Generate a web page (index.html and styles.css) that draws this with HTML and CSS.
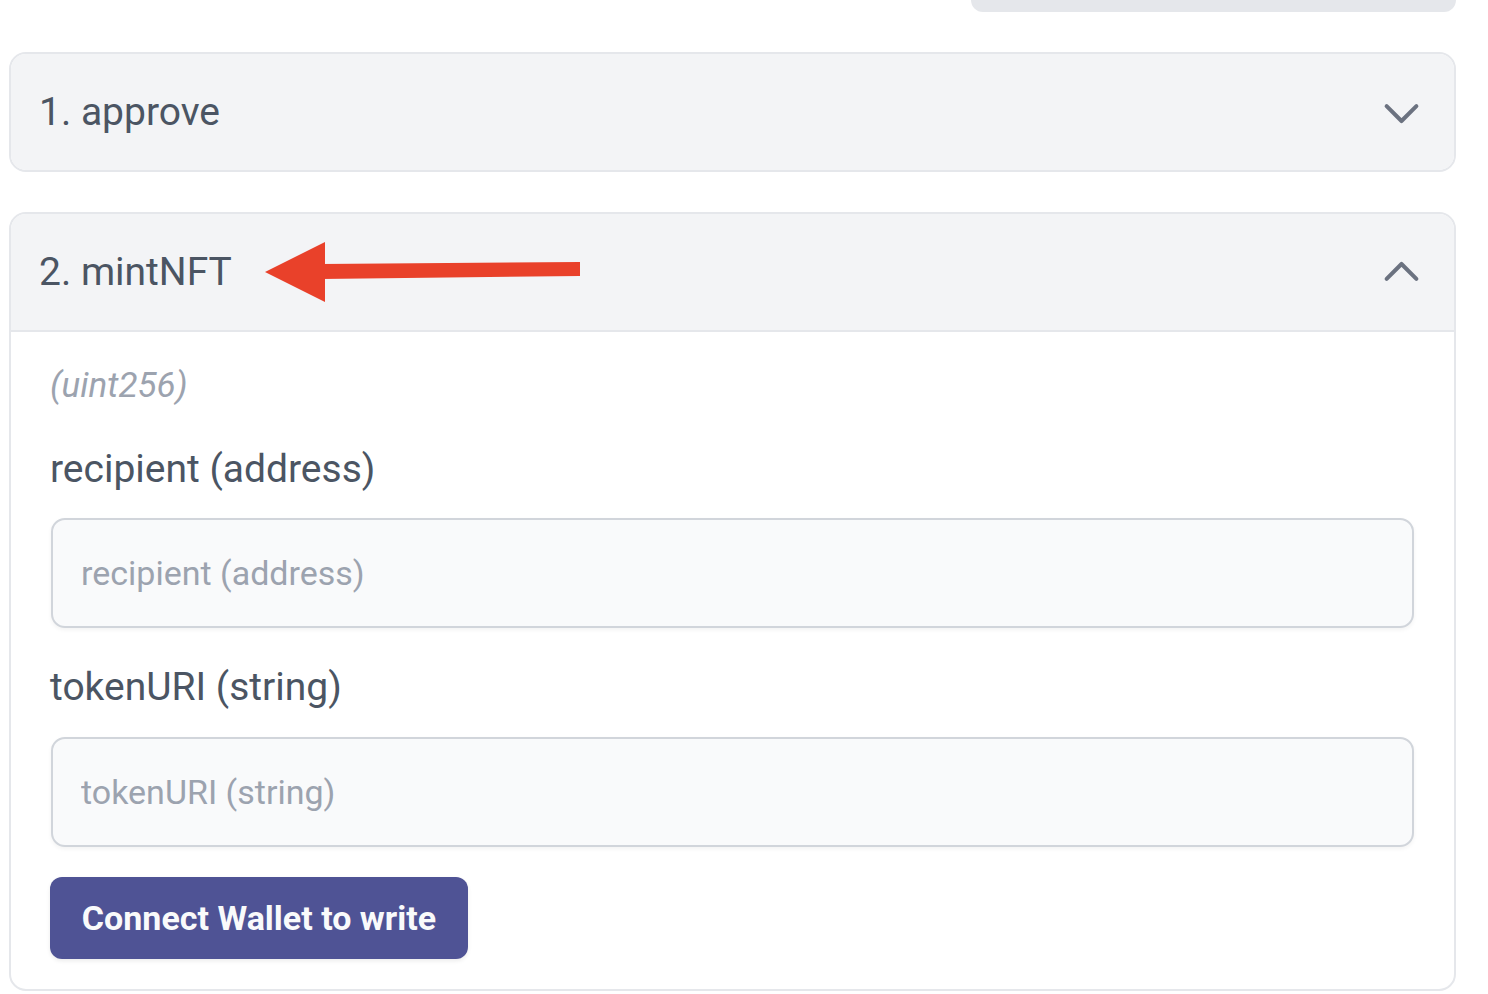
FILE: index.html
```html
<!DOCTYPE html>
<html>
<head>
<meta charset="utf-8">
<link rel="stylesheet" href="styles.css">
</head>
<body>
<div class="page">
  <div class="topbar"></div>

  <section class="card">
    <div class="card-head">
      <span class="title">1. approve</span>
      <svg class="chev" viewBox="0 0 24 24" fill="none"><path d="M19 9l-7 7-7-7"/></svg>
    </div>
  </section>

  <section class="card open">
    <div class="card-head">
      <span class="title">2. mintNFT</span>
      <svg class="arrow" viewBox="0 0 320 70"><polygon points="4,34 64,4 64,64"/><polygon points="60,26 319,24 319,38 60,41"/></svg>
      <svg class="chev" viewBox="0 0 24 24" fill="none"><path d="M5 15l7-7 7 7"/></svg>
    </div>
    <div class="card-body">
      <div class="ret">(uint256)</div>
      <label class="field-label">recipient (address)</label>
      <input class="field" type="text" placeholder="recipient (address)">
      <label class="field-label second">tokenURI (string)</label>
      <input class="field second-input" type="text" placeholder="tokenURI (string)">
      <button class="btn" type="button">Connect Wallet to write</button>
    </div>
  </section>
</div>
</body>
</html>
```

FILE: styles.css
```css
* { box-sizing: border-box; }
html, body { margin: 0; padding: 0; background: #ffffff; }
body { font-family: Roboto, "Liberation Sans", Arial, sans-serif; }

.page {
  width: 1456px;
  padding-left: 9px;
  display: flex;
  flex-direction: column;
}

.topbar {
  align-self: flex-end;
  width: 485px;
  height: 12px;
  background: #e5e7eb;
  border-radius: 0 0 17px 17px;
}

.card {
  margin-top: 40px;
  border: 2px solid #e5e7eb;
  border-radius: 17px;
  overflow: hidden;
  background: #ffffff;
}

.card-head {
  position: relative;
  height: 116px;
  padding: 0 27px 0 28px;
  background: #f3f4f6;
  display: flex;
  align-items: center;
  justify-content: space-between;
}

.card.open .card-head {
  height: 118px;
  border-bottom: 2px solid #e5e7eb;
}

.title {
  font-size: 39px;
  line-height: 1;
  color: #4b5563;
}

.chev {
  width: 51px;
  height: 51px;
  stroke: #6b7280;
  stroke-width: 1.9;
  stroke-linecap: round;
  stroke-linejoin: round;
}

.arrow {
  position: absolute;
  left: 250px;
  top: 24px;
  width: 320px;
  height: 70px;
  fill: #e9412a;
}

.card-body {
  padding: 28px 40px 30px 39px;
  display: flex;
  flex-direction: column;
}

.ret {
  font-size: 35px;
  line-height: 51px;
  font-style: italic;
  color: #9ca3af;
}

.field-label {
  margin-top: 30px;
  font-size: 39px;
  line-height: 57px;
  color: #4b5563;
}

.field-label.second { margin-top: 31px; }

.field {
  margin-top: 20px;
  margin-left: 1px;
  height: 110px;
  width: calc(100% - 1px);
  border: 2px solid #d1d5db;
  border-radius: 14px;
  background: #f9fafb;
  padding: 0 28px;
  font-family: Roboto, "Liberation Sans", Arial, sans-serif;
  font-size: 34px;
  color: #374151;
  box-shadow: 0 2px 4px rgba(0, 0, 0, 0.05);
  outline: none;
}

.field.second-input { margin-top: 21px; }

.field::placeholder { color: #9ca3af; }

.btn {
  align-self: flex-start;
  margin-top: 30px;
  height: 82px;
  width: 418px;
  border: none;
  border-radius: 12px;
  background: #4f5395;
  color: #f9fafb;
  font-family: Roboto, "Liberation Sans", Arial, sans-serif;
  font-weight: 700;
  font-size: 34px;
  box-shadow: 0 2px 4px rgba(0, 0, 0, 0.08);
}
```
